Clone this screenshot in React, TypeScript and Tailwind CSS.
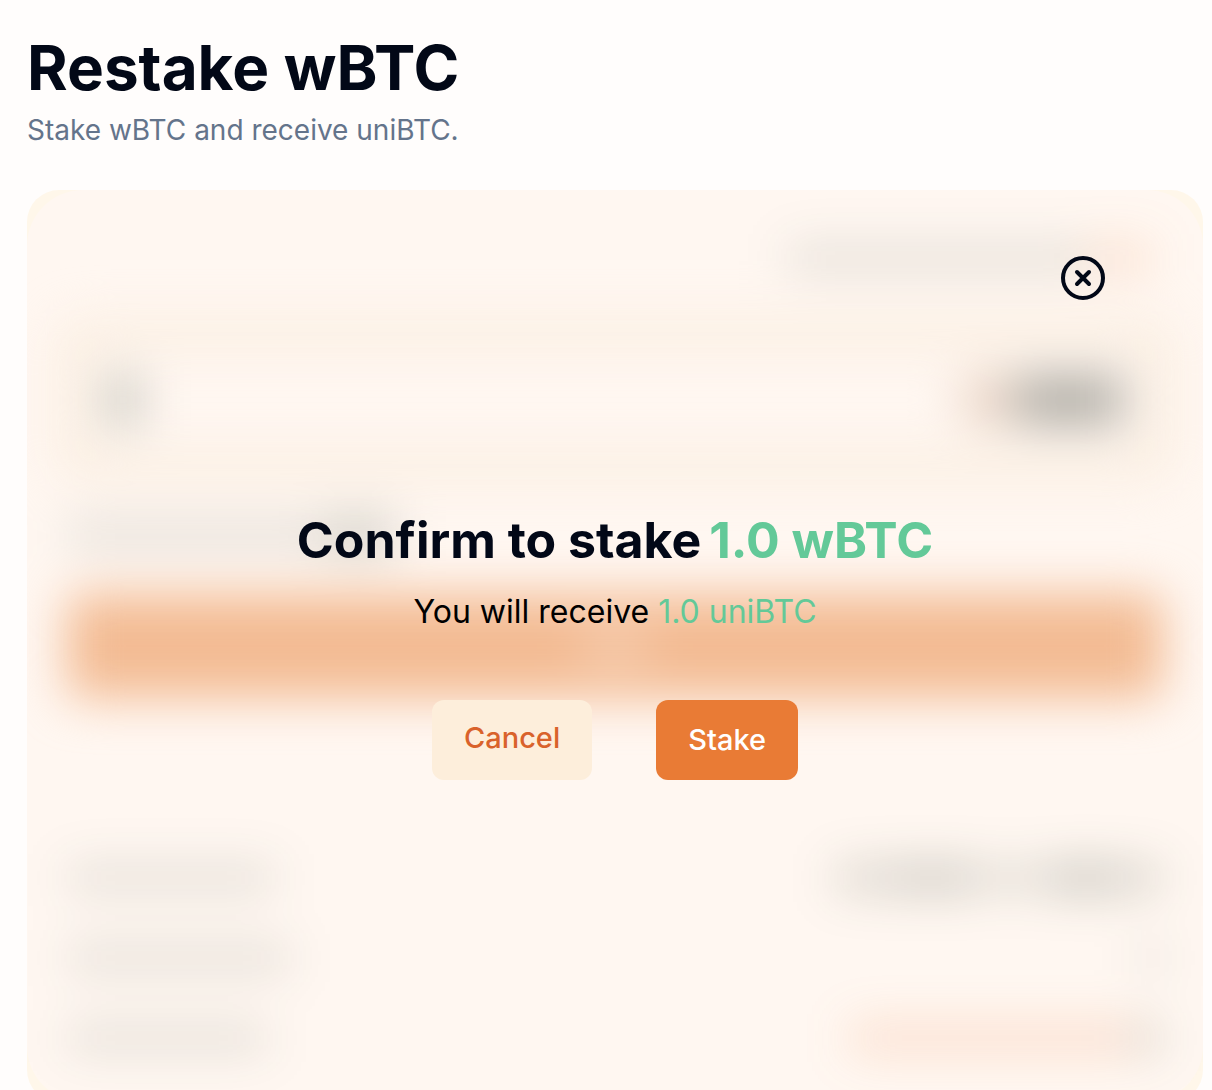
import React from "react";

function Bar({ className }: { className: string }) {
  return <span className={`block h-6 ${className}`} />;
}

function ObscuredForm() {
  return (
    <div aria-hidden="true" className="flex flex-col px-8 pt-14 pb-13 blur-[24px]">
      <div className="flex h-6 items-center justify-end pr-5">
        <Bar className="w-75 bg-[#1c3420]/14" />
        <Bar className="w-16 bg-[#e97a35]/22" />
      </div>

      <div className="mt-13 flex h-39 items-center justify-between rounded-3xl border-24 border-[#f9ecdd] px-6">
        <span className="block h-12 w-8 bg-[#1c3420]/28" />
        <div className="flex items-center">
          <span className="block size-14 rounded-full bg-[#b98762]/30" />
          <span className="block h-12 w-27 bg-[#1c2018]/36" />
        </div>
      </div>

      <div className="mt-11 flex h-6 items-center pl-2">
        <Bar className="w-64 bg-[#1c3420]/14" />
        <span className="block h-8 w-18 bg-[#1c3420]/22" />
      </div>

      <div className="mx-2 mt-12 flex h-26 items-center justify-center rounded-xl bg-[#f3bb93]">
        <span className="h-6 w-16 bg-white/40" />
      </div>

      <div className="mt-42 flex flex-col gap-14 px-2">
        <div className="flex h-6 items-center justify-between">
          <Bar className="w-52 bg-[#1c3420]/14" />
          <div className="flex">
            <Bar className="w-16 bg-[#1c3420]/20" />
            <Bar className="w-18 bg-[#1c3420]/27" />
            <Bar className="w-20 bg-[#1c3420]/15" />
            <Bar className="w-16 bg-[#1c3420]/29" />
            <Bar className="w-12 bg-[#1c3420]/20" />
          </div>
        </div>
        <div className="flex h-6 items-center justify-between">
          <Bar className="w-56 bg-[#1c3420]/14" />
          <Bar className="w-5 bg-[#1c3420]/18" />
        </div>
        <div className="flex h-6 items-center justify-between">
          <Bar className="w-50 bg-[#1c3420]/14" />
          <div className="flex">
            <Bar className="w-70 bg-[#e97a35]/24" />
            <Bar className="w-8 bg-[#1c3420]/20" />
          </div>
        </div>
      </div>
    </div>
  );
}

function ConfirmDialog() {
  return (
    <section
      role="dialog"
      aria-labelledby="confirm-title"
      className="absolute inset-0 flex flex-col items-center justify-center"
    >
      <button type="button" aria-label="Close" className="absolute top-16 right-24 size-12 text-[#020817]">
        <svg viewBox="0 0 48 48" fill="none" stroke="currentColor" strokeWidth="4" strokeLinecap="round" className="size-12">
          <circle cx="24" cy="24" r="20" />
          <path d="M18 18l12 12M30 18L18 30" />
        </svg>
      </button>

      <h2 id="confirm-title" className="flex gap-2 text-[50px] leading-14 font-bold text-[#020817]">
        Confirm to stake <span className="text-[#63c998]">1.0 wBTC</span>
      </h2>
      <p className="mt-5 text-[32px] leading-12 text-black">
        You will receive <span className="text-[#63c998]">1.0 uniBTC</span>
      </p>
      <div className="mt-16 flex gap-16">
        <button type="button" className="h-20 rounded-xl bg-[#fdeedb] px-8 pb-1 text-[29px] font-medium text-[#d9622b]">
          Cancel
        </button>
        <button type="button" className="h-20 rounded-xl bg-[#e97b35] px-8 text-[29px] font-medium text-white">
          Stake
        </button>
      </div>
    </section>
  );
}

export default function App() {
  return (
    <main className="min-h-screen bg-[#fffdfc] pt-8 pr-[9px] pl-[27px] font-['Inter',sans-serif]">
      <h1 className="text-[62px] leading-18 font-bold text-[#020817]">Restake wBTC</h1>
      <p className="mt-2 text-[28px] leading-9 text-[#64748b]">Stake wBTC and receive uniBTC.</p>
      <div className="relative mt-[42px] overflow-hidden rounded-4xl bg-[#fff7ea]">
        <div className="rounded-[56px] bg-[#fff7f1]">
          <ObscuredForm />
        </div>
        <ConfirmDialog />
      </div>
    </main>
  );
}
